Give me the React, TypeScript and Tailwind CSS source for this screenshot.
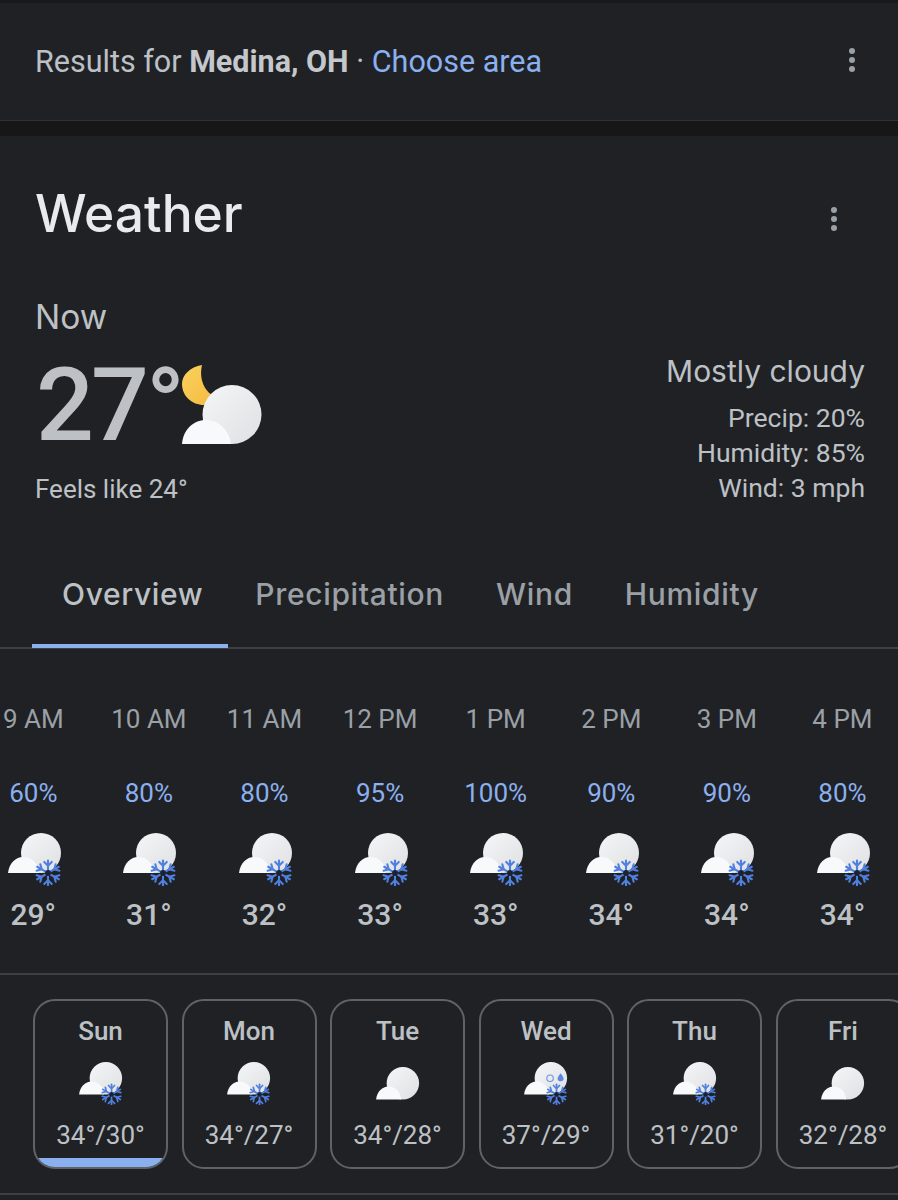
const hours = [
  { time: '9 AM', precip: '60%', temp: '29°' },
  { time: '10 AM', precip: '80%', temp: '31°' },
  { time: '11 AM', precip: '80%', temp: '32°' },
  { time: '12 PM', precip: '95%', temp: '33°' },
  { time: '1 PM', precip: '100%', temp: '33°' },
  { time: '2 PM', precip: '90%', temp: '34°' },
  { time: '3 PM', precip: '90%', temp: '34°' },
  { time: '4 PM', precip: '80%', temp: '34°' },
];

const days = [
  { name: 'Sun', high: '34°', low: '30°', kind: 'snow' },
  { name: 'Mon', high: '34°', low: '27°', kind: 'snow' },
  { name: 'Tue', high: '34°', low: '28°', kind: 'cloud' },
  { name: 'Wed', high: '37°', low: '29°', kind: 'mix' },
  { name: 'Thu', high: '31°', low: '20°', kind: 'snow' },
  { name: 'Fri', high: '32°', low: '28°', kind: 'cloud' },
];

function Dots({ className }: { className: string }) {
  return (
    <div className={`flex flex-col gap-[3px] ${className}`}>
      <span className="w-[6px] h-[6px] rounded-full bg-[#9aa0a6]" />
      <span className="w-[6px] h-[6px] rounded-full bg-[#9aa0a6]" />
      <span className="w-[6px] h-[6px] rounded-full bg-[#9aa0a6]" />
    </div>
  );
}

function Gradients() {
  return (
    <defs>
      <linearGradient id="big" x1="0.15" y1="0.1" x2="0.9" y2="0.9">
        <stop offset="0" stopColor="#f1f3f4" />
        <stop offset="1" stopColor="#e0e2e5" />
      </linearGradient>
      <linearGradient id="moon" x1="0" y1="0" x2="1" y2="1">
        <stop offset="0" stopColor="#fbd25e" />
        <stop offset="1" stopColor="#f3b93f" />
      </linearGradient>
    </defs>
  );
}

function Flake({ x, y, r }: { x: number; y: number; r: number }) {
  const arms = [0, 60, 120, 180, 240, 300];
  return (
    <g transform={`translate(${x} ${y}) scale(${r / 12})`}>
      {arms.map((a) => (
        <g key={a} transform={`rotate(${a})`} stroke="#4f80e1" strokeWidth="2" strokeLinecap="round" fill="none">
          <path d="M0 -2.5 L0 -12" />
          <path d="M-3.6 -10.6 L0 -7 L3.6 -10.6" />
        </g>
      ))}
      <circle r="2.8" fill="#1a2233" />
    </g>
  );
}

// cloud + optional snow, origin is the left edge of the small cloud
function WeatherIcon({ kind, className }: { kind: string; className: string }) {
  return (
    <svg viewBox="0 0 54 53" className={className}>
      <Gradients />
      <circle cx="33" cy="20" r="20" fill="url(#big)" />
      <path d="M0 40 C1 30 8 24 15 24 C24 24 30 30 31 40 Z" fill="#f8f9fa" />
      {kind === 'mix' && (
        <>
          <circle cx="32" cy="20" r="4" fill="none" stroke="#6d93e6" strokeWidth="1.4" />
          <path d="M45 14 C48 18 49 19.5 48.6 21.3 C47.9 24.7 42.1 24.7 41.4 21.3 C41 19.5 42 18 45 14 Z" fill="#5c88e4" />
        </>
      )}
      {kind !== 'cloud' && <Flake x={40} y={40} r={12.5} />}
    </svg>
  );
}

function MoonCloud() {
  return (
    <svg viewBox="0 0 80 80" className="w-[80px] h-[80px] shrink-0">
      <Gradients />
      <path d="M20 0 C8 2 0 10 0 19 C0 31 10 40 22 40 C28 40 33 37 36 33 C26 30 16 18 20 0 Z" fill="url(#moon)" />
      <circle cx="50" cy="49.5" r="29.5" fill="url(#big)" />
      <path d="M0 79 C1 65 11 55 24 55 C37 55 47 65 49 79 Z" fill="#f8f9fa" />
    </svg>
  );
}

export default function App() {
  return (
    <div className="w-[898px] h-[1200px] overflow-hidden bg-[#202124] font-['Roboto',sans-serif]">
      <div className="h-[3px] bg-[#18191b]" />
      <div className="h-[118px] flex items-center justify-between pl-[35px] pr-[43px] border-b border-[#303134]">
        <p className="text-[30.5px] text-[#bdc1c6]">
          Results for <b className="font-bold text-[#c4c7cb]">Medina, OH</b> · <span className="text-[#8ab0f0]">Choose area</span>
        </p>
        <Dots className="-mt-[3px]" />
      </div>
      <div className="h-[15px] bg-[#171717]" />

      <div className="pt-[49px] pl-[35px] pr-[34px] flex items-center justify-between">
        <h1 className="font-['Inter',sans-serif] font-medium text-[51.5px] leading-[56px] text-[#e8eaed]">Weather</h1>
        <Dots className="mt-[11px] mr-[27px]" />
      </div>

      <div className="pl-[35px] pr-[33px] mt-[56px] flex justify-between">
        <div>
          <div className="font-['Inter',sans-serif] text-[33.5px] leading-[40px] text-[#bdc1c6]">Now</div>
          <div className="flex mt-[28px] h-[80px] -mb-[1px] pl-[1px]">
            <span className="text-[102px] leading-[80px] font-medium text-[#bdc1c6] tracking-[-3px]">27°</span>
            <MoonCloud />
          </div>
          <div className="text-[26px] leading-[30px] mt-[30px] text-[#bdc1c6]">Feels like 24°</div>
        </div>
        <div className="text-right pt-[54px]">
          <div className="font-['Inter',sans-serif] text-[30px] leading-[40px] text-[#bdc1c6]">Mostly cloudy</div>
          <div className="text-[26.5px] leading-[35px] mt-[9px] text-[#bdc1c6]">
            <div>Precip: 20%</div>
            <div>Humidity: 85%</div>
            <div>Wind: 3 mph</div>
          </div>
        </div>
      </div>

      <div className="mt-[52px] border-b-2 border-[#3c4043] pl-[36px] flex h-[92px] pb-[16px] font-['Inter',sans-serif] font-medium text-[30px] tracking-[0.65px] text-[#9aa0a6]">
        <div className="px-[26px] flex flex-col justify-center relative text-[#bdc1c6]">
          Overview
          <div className="absolute -bottom-[17px] -left-[4px] right-[1px] h-[4px] bg-[#8ab0f0]" />
        </div>
        <div className="px-[26px] flex items-center">Precipitation</div>
        <div className="px-[26px] flex items-center">Wind</div>
        <div className="px-[26px] flex items-center">Humidity</div>
      </div>

      <div className="flex -ml-[24.5px] h-[326px] border-b-2 border-[#3c4043] pt-[54px]">
        {hours.map((h) => (
          <div key={h.time} className="w-[115.6px] shrink-0 flex flex-col items-center">
            <div className="text-[26px] leading-[32px] text-[#9aa0a6]">{h.time}</div>
            <div className="text-[26px] leading-[32px] mt-[42px] text-[#8ab0f0]">{h.precip}</div>
            <WeatherIcon kind="snow" className="w-[54px] h-[53px] mt-[24px] ml-[3px]" />
            <div className="text-[30px] leading-[32px] mt-[13px] font-medium text-[#bdc1c6]">{h.temp}</div>
          </div>
        ))}
      </div>

      <div className="flex gap-[13.5px] pl-[33px] pt-[24px] pb-[24px] border-b-2 border-[#3c4043]">
        {days.map((d, i) => (
          <div key={d.name} className="relative w-[135px] h-[170px] shrink-0 rounded-[22px] border-2 border-[#5f6368] flex flex-col items-center overflow-hidden">
            <div className="mt-[14px] text-[26px] leading-[32px] font-medium text-[#bdc1c6]">{d.name}</div>
            <WeatherIcon kind={d.kind} className={`w-[44px] h-[43px] ${d.kind === 'cloud' ? 'mt-[20px]' : 'mt-[15px]'}`} />
            <div className={`text-[26px] leading-[32px] text-[#bdc1c6] ${d.kind === 'cloud' ? 'mt-[9px]' : 'mt-[14px]'}`}>{d.high}/{d.low}</div>
            {i === 0 && <div className="absolute bottom-0 inset-x-0 h-[9px] bg-[#8ab0f0]" />}
          </div>
        ))}
      </div>
    </div>
  );
}
